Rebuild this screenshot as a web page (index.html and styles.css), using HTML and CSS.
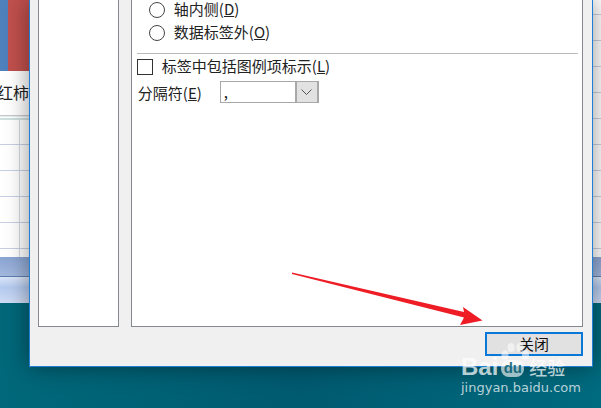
FILE: index.html
```html
<!DOCTYPE html>
<html lang="en">
    <head>
        <meta charset="UTF-8">
        <meta name="viewport" content="width=device-width, initial-scale=1.0">
        <title>数据标签</title>
        <link rel="stylesheet" href="styles.css">
    </head>
    <body>

<div class="desktop">
    <!-- excel window behind the dialog -->
    <div class="back-window">
        <div class="ribbon">
            <div class="ribbon-blue"></div>
            <div class="ribbon-red"></div>
        </div>
        <div class="tab-row">红柿</div>
        <div class="sheet-top"></div>
        <div class="sheet"></div>
        <div class="status-bar"></div>
        <div class="task-bar"></div>
    </div>

    <!-- piece of the sheet showing on the right of the dialog -->
    <div class="right-strip"></div>

    <div class="dialog">
        <div class="panels">
            <div class="panel panel-left"></div>
            <div class="panel panel-right">
                <div class="radio-row"><span class="radio"></span><span>轴内侧(<u>D</u>)</span></div>
                <div class="radio-row"><span class="radio"></span><span>数据标签外(<u>O</u>)</span></div>
                <div class="separator"></div>
                <div class="check-row"><span class="checkbox"></span><span>标签中包括图例项标示(<u>L</u>)</span></div>
                <div class="select-row">
                    <span class="select-label">分隔符(<u>E</u>)</span>
                    <div class="select">
                        <span class="select-value">,</span>
                        <span class="select-arrow">
                            <svg width="11" height="7" viewBox="0 0 11 7"><path d="M0.5 0.5 L5.5 5.5 L10.5 0.5" fill="none" stroke="#555" stroke-width="1"/></svg>
                        </span>
                    </div>
                </div>
            </div>
        </div>
        <div class="footer">
            <button class="close-btn">关闭</button>
        </div>
    </div>

    <!-- red annotation arrow -->
    <svg class="arrow" width="601" height="408" viewBox="0 0 601 408">
        <polygon points="292,272.5 464,312 463,307 482.5,320.5 460,325 464,317.5 292,274" fill="#ee1c25"/>
    </svg>

    <!-- watermark -->
    <div class="watermark">
        <svg class="paw" width="28" height="24" viewBox="0 0 28 24">
            <ellipse cx="4" cy="12" rx="3.5" ry="4.5"/>
            <ellipse cx="10" cy="4.5" rx="3.5" ry="4.5"/>
            <ellipse cx="19" cy="4.5" rx="3.5" ry="4.5"/>
            <ellipse cx="24.5" cy="12" rx="3.5" ry="4.5"/>
        </svg>
        <div class="wm-logo"><span class="wm-bai">Bai</span><span class="wm-du">du</span><span class="wm-cn">经验</span></div>
        <div class="wm-url">jingyan.baidu.com</div>
    </div>
</div>

    </body>
</html>
```

FILE: styles.css
```css
html, body {
    margin: 0;
    padding: 0;
}
body {
    font-family: "Noto Sans CJK SC", "Liberation Sans", sans-serif;
    font-size: 15px;
    color: #222;
}
.desktop {
    position: relative;
    width: 601px;
    height: 408px;
    overflow: hidden;
    background: linear-gradient(90deg, #00687a, #005a70 50%, #006a7e);
}

/* back window */
.back-window {
    display: flex;
    flex-direction: column;
    width: 100%;
}
.ribbon {
    display: flex;
    height: 71px;
    background-color: #f4f4f4;
}
.ribbon-blue {
    width: 8px;
    background-color: #4f81bd;
}
.ribbon-red {
    width: 21px;
    background-color: #c0504d;
}
.tab-row {
    height: 44px;
    line-height: 43px;
    font-size: 16px;
    background-color: #fff;
    margin-left: -3px;
    white-space: nowrap;
}
.sheet-top {
    height: 5px;
    background: linear-gradient(#c9c9c9 0, #c9c9c9 1px, #e3eeee 1px, #e3eeee 2px, #fff 2px, #fff 3px, #cfe0e0 3px);
}
.sheet {
    height: 137px;
    background-color: #fff;
    background-image:
        linear-gradient(#c6cfe4 1px, transparent 1px),
        linear-gradient(90deg, #d3d7e4 1px, transparent 1px);
    background-size: 100% 26px, 100% 100%;
    background-position: 0 24px, 19px 0;
    background-repeat: repeat, no-repeat;
}
.status-bar {
    height: 19px;
    background: linear-gradient(#8aa5d3, #a3b8dd);
    border-bottom: 1px solid #5d7fb0;
}
.task-bar {
    height: 26px;
    background: linear-gradient(#dbe6f8, #b4caef 40%, #cfdcf4);
}
.right-strip {
    position: absolute;
    left: 593px;
    top: 0;
    width: 8px;
    height: 257px;
    background-color: #fff;
    background-image: linear-gradient(#c6cfe4 1px, transparent 1px);
    background-size: 100% 26px;
    background-position: 0 14px;
}

/* dialog */
.dialog {
    position: absolute;
    left: 29px;
    top: 0;
    box-sizing: border-box;
    width: 564px;
    height: 367px;
    display: flex;
    flex-direction: column;
    padding: 0 9px 0 8px;
    background-color: #f0f0f0;
    border: 1px solid #1f7fd6;
    border-top: none;
    box-shadow: 0 0 22px rgba(0, 0, 0, 0.42);
}
.panels {
    display: flex;
    gap: 12px;
    height: 327px;
    flex-shrink: 0;
}
.panel {
    box-sizing: border-box;
    background-color: #fff;
    border: 1px solid #85888c;
    border-top: none;
}
.panel-left {
    width: 81px;
}
.panel-right {
    width: 453px;
    display: flex;
    flex-direction: column;
    padding: 0 4px 0 5px;
}
.radio-row {
    display: flex;
    align-items: center;
    height: 20px;
    line-height: 16px;
    margin-bottom: 3px;
    padding-left: 12px;
    gap: 9px;
}
.radio-row span:last-child {
    margin-top: -3px;
}
.radio {
    width: 14px;
    height: 14px;
    border: 1px solid #444;
    border-radius: 50%;
    background-color: #fff;
    flex-shrink: 0;
}
.separator {
    height: 1px;
    margin-top: 7px;
    background-color: #b9b9b9;
}
.check-row {
    display: flex;
    align-items: center;
    gap: 9px;
    height: 18px;
    margin-top: 4px;
}
.check-row span:last-child {
    margin-top: -3px;
}
.checkbox {
    width: 14px;
    height: 14px;
    border: 1px solid #333;
    background-color: #fff;
    flex-shrink: 0;
}
.select-row {
    display: flex;
    align-items: center;
    margin-top: 5px;
    padding-left: 1px;
}
.select-label {
    width: 82px;
    flex-shrink: 0;
    line-height: 18px;
    margin-top: 1px;
}
.select {
    box-sizing: border-box;
    display: flex;
    width: 99px;
    height: 22px;
    background-color: #fff;
    border: 1px solid #a8a8a8;
    border-right-width: 2px;
}
.select-value {
    flex: 1;
    padding-left: 3px;
    line-height: 20px;
}
.select-arrow {
    box-sizing: border-box;
    width: 22px;
    display: flex;
    align-items: center;
    justify-content: center;
    background-color: #e2e2e2;
    border-left: 2px solid #a8a8a8;
}
.footer {
    display: flex;
    justify-content: flex-end;
    padding-top: 5px;
}
.close-btn {
    box-sizing: border-box;
    width: 98px;
    height: 24px;
    padding: 0;
    font-family: inherit;
    font-size: 15px;
    line-height: 18px;
    color: #111;
    background-color: #e1e1e1;
    border: 2px solid #0a78d7;
}

.arrow {
    position: absolute;
    left: 0;
    top: 0;
}

/* watermark */
.watermark {
    position: absolute;
    left: 461px;
    top: 343px;
    width: 110px;
    color: rgba(255, 255, 255, 0.72);
}
.paw {
    position: absolute;
    left: 40px;
    top: 0;
    fill: rgba(255, 255, 255, 0.55);
}
.wm-logo {
    display: flex;
    align-items: center;
    margin-top: 12px;
    height: 24px;
    line-height: 24px;
    font-family: "Liberation Sans", sans-serif;
    font-weight: bold;
    font-size: 24px;
}
.wm-du {
    margin-left: 3px;
    width: 23px;
    height: 17px;
    margin-top: 3px;
    line-height: 16px;
    font-size: 15px;
    text-align: center;
    color: rgba(0, 90, 112, 0.85);
    background-color: rgba(255, 255, 255, 0.62);
    border-radius: 8px;
}
.wm-cn {
    margin-left: 5px;
    font-family: "Noto Sans CJK SC", sans-serif;
    font-size: 18px;
    font-weight: 500;
}
.wm-url {
    margin-top: 1px;
    font-family: "DejaVu Sans", sans-serif;
    font-size: 13px;
    line-height: 16px;
    white-space: nowrap;
}
```
